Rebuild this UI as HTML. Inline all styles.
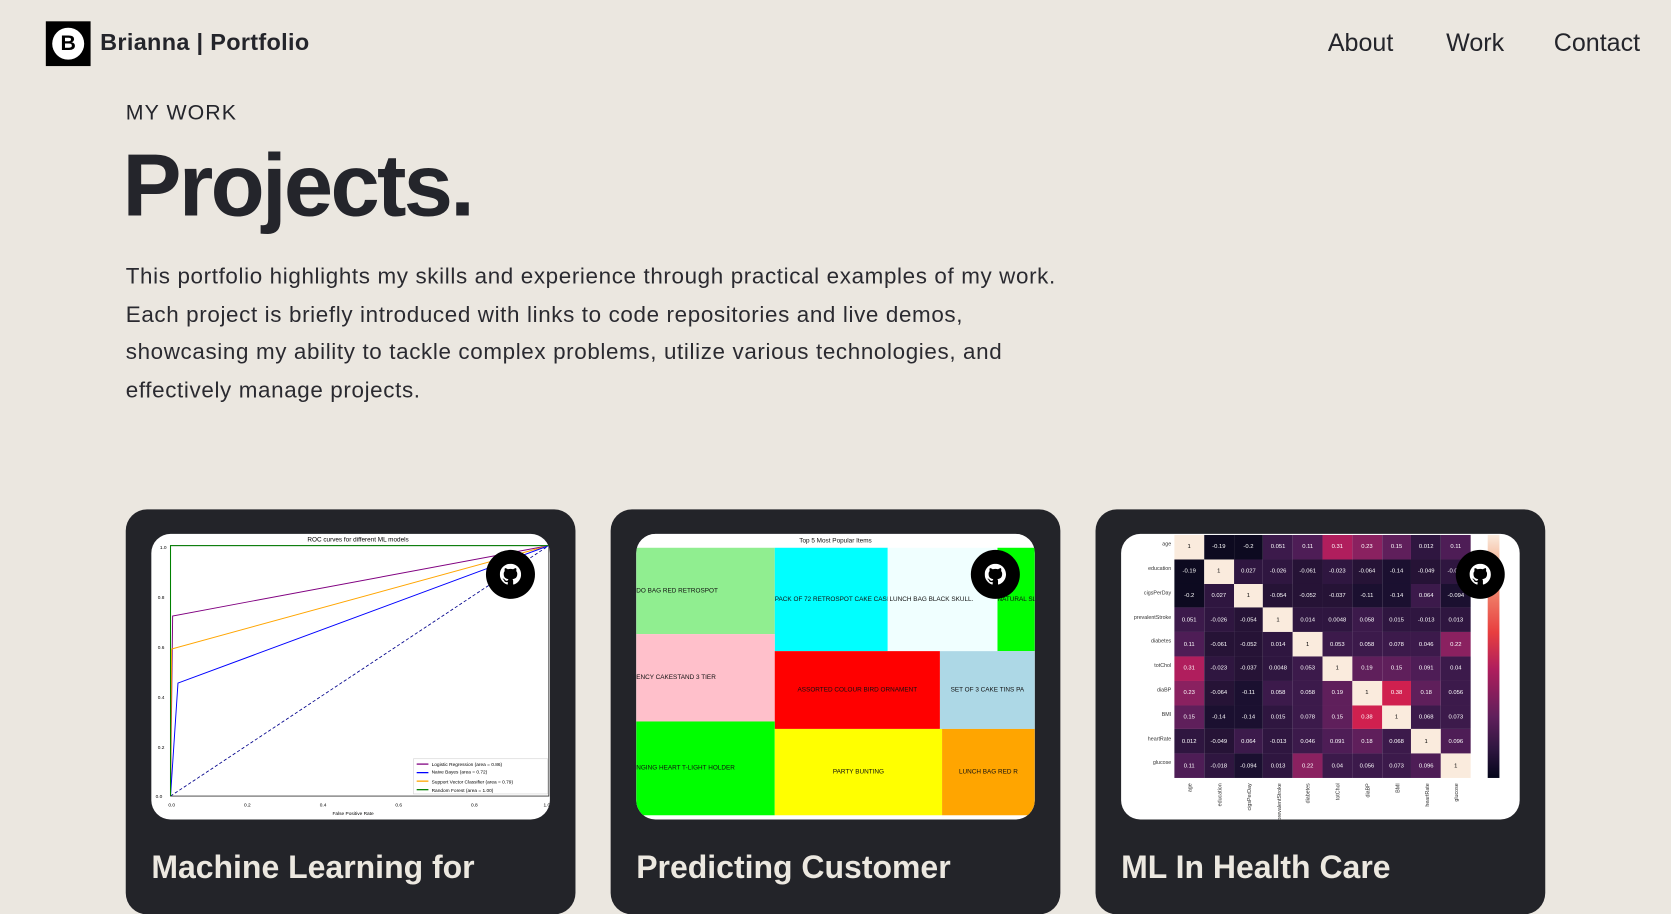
<!DOCTYPE html>
<html><head><meta charset="utf-8">
<style>
html,body{margin:0;padding:0;width:1671px;height:893px;overflow:hidden;background:#ebe7e0}
#w{position:absolute;left:0;top:0;width:1568px;height:838px;transform:scale(1.06569);transform-origin:0 0;font-family:"Liberation Sans",sans-serif;color:#24252b}
.a{position:absolute}
.nav{position:absolute;top:27px;font-size:23.5px;color:#24252b}
.card{position:absolute;top:478px;width:422px;height:380px;background:#232429;border-radius:20px}
.img{position:absolute;left:24px;top:23px;width:374px;height:268px;background:#fff;border-radius:18px;overflow:hidden}
.gh{position:absolute;width:46px;height:46px;border-radius:50%;background:#000;display:flex;align-items:center;justify-content:center}
.title{position:absolute;left:24px;top:320px;font-size:30px;font-weight:bold;color:#ece8e0;white-space:nowrap;letter-spacing:0px}
.tm div{position:absolute;font-size:6px;display:flex;align-items:center;color:#111;white-space:nowrap;overflow:hidden}
.hm{position:absolute;left:50px;top:1px;display:grid;grid-template-columns:repeat(10,27.8px);grid-auto-rows:22.8px}
.hm span{display:flex;align-items:center;justify-content:center;font-size:5.5px;color:#fff}
.a1{background:#0d0a20}.b{background:#1b1030}.c{background:#261336}.d{background:#2f1640}.e{background:#3c1a4b}.f{background:#4e1d56}.g{background:#5f1f5b}.h{background:#8a2160}.i{background:#b01e5d}.j{background:#d0204f}.k{background:#faebdd;color:#000!important}
.rl{position:absolute;left:0;width:47px;text-align:right;font-size:5px;color:#333}
</style></head><body><div id="w">
<div class="a" style="left:43px;top:20px;width:42px;height:42px;background:#000"><div class="a" style="left:6px;top:6px;width:30px;height:30px;border-radius:50%;background:#fff;color:#000;font-weight:bold;font-size:20px;text-align:center;line-height:30px">B</div></div>
<div class="a" style="left:94px;top:27px;font-size:22px;font-weight:bold;letter-spacing:0.3px">Brianna | Portfolio</div>
<div class="nav" style="left:1246px">About</div>
<div class="nav" style="left:1357px">Work</div>
<div class="nav" style="left:1458px">Contact</div>
<div class="a" style="left:118px;top:95px;font-size:20px;letter-spacing:1px">MY WORK</div>
<div class="a" style="left:115px;top:126px;font-size:83px;font-weight:900;letter-spacing:-2.5px">Projects.</div>
<div class="a" style="left:118px;top:242px;white-space:nowrap;font-size:21px;line-height:35.5px;letter-spacing:0.6px;color:#2a2a30">This portfolio highlights my skills and experience through practical examples of my work.<br>Each project is briefly introduced with links to code repositories and live demos,<br>showcasing my ability to tackle complex problems, utilize various technologies, and<br>effectively manage projects.</div>

<div class="card" style="left:118px"><div class="img">
<svg width="374" height="268" viewBox="142 502 374 268" style="position:absolute;left:0;top:0">
<text x="336" y="509" font-size="6" text-anchor="middle" font-family="Liberation Sans">ROC curves for different ML models</text>
<rect x="160" y="513" width="355" height="235" fill="none" stroke="#333" stroke-width="0.8"/>
<line x1="160" y1="748" x2="515" y2="513" stroke="#00008b" stroke-dasharray="3,2" stroke-width="0.8"/>
<polyline points="160,748 162,579 515,513" fill="none" stroke="#800080" stroke-width="0.9"/>
<polyline points="160,748 161,610 515,513" fill="none" stroke="#ffa500" stroke-width="0.9"/>
<polyline points="160,748 167,642 515,513" fill="none" stroke="#0000ff" stroke-width="0.9"/>
<polyline points="160,748 160,513 515,513" fill="none" stroke="#008000" stroke-width="1"/>
<rect x="388" y="713" width="126" height="33" fill="#fff" stroke="#ccc" stroke-width="0.5"/>
<g font-size="4.5" font-family="Liberation Sans"><text x="405" y="720">Logistic Regression (area = 0.86)</text><text x="405" y="727">Naive Bayes (area = 0.72)</text><text x="405" y="736">Support Vector Classifier (area = 0.79)</text><text x="405" y="744">Random Forest (area = 1.00)</text>
<text x="150" y="516">1.0</text><text x="148" y="563">0.8</text><text x="148" y="610">0.6</text><text x="148" y="657">0.4</text><text x="148" y="704">0.2</text><text x="146" y="750">0.0</text>
<text x="158" y="758">0.0</text><text x="229" y="758">0.2</text><text x="300" y="758">0.4</text><text x="371" y="758">0.6</text><text x="442" y="758">0.8</text><text x="510" y="758">1.0</text>
<text x="312" y="766">False Positive Rate</text></g>
<g stroke-width="1.2"><line x1="391" y1="718" x2="402" y2="718" stroke="#800080"/><line x1="391" y1="726" x2="402" y2="726" stroke="#0000ff"/><line x1="391" y1="734" x2="402" y2="734" stroke="#ffa500"/><line x1="391" y1="742" x2="402" y2="742" stroke="#008000"/></g>
</svg></div>
<div class="title">Machine Learning for</div></div>

<div class="card" style="left:573px"><div class="img tm">
<div style="left:0;top:0;width:374px;height:13px;justify-content:center;background:#fff">Top 5 Most Popular Items</div>
<div style="left:0;top:13px;width:130px;height:81px;background:#90ee90">DO BAG RED RETROSPOT</div>
<div style="left:130px;top:13px;width:106px;height:97px;background:#00ffff">PACK OF 72 RETROSPOT CAKE CASES</div>
<div style="left:236px;top:13px;width:103px;height:97px;background:#f0ffff">&nbsp;LUNCH BAG BLACK SKULL.</div>
<div style="left:339px;top:13px;width:35px;height:97px;background:#00ff00">NATURAL SLATE</div>
<div style="left:0;top:94px;width:130px;height:82px;background:#ffc0cb">ENCY CAKESTAND 3 TIER</div>
<div style="left:130px;top:110px;width:155px;height:73px;background:#ff0000;justify-content:center">ASSORTED COLOUR BIRD ORNAMENT</div>
<div style="left:285px;top:110px;width:89px;height:73px;background:#add8e6;justify-content:center">SET OF 3 CAKE TINS PA</div>
<div style="left:0;top:176px;width:130px;height:88px;background:#00ff00">NGING HEART T-LIGHT HOLDER</div>
<div style="left:130px;top:183px;width:157px;height:81px;background:#ffff00;justify-content:center">PARTY BUNTING</div>
<div style="left:287px;top:183px;width:87px;height:81px;background:#ffa500;justify-content:center">LUNCH BAG RED R</div>
</div>
<div class="title">Predicting Customer</div></div>

<div class="card" style="left:1028px"><div class="img">
<div class="rl" style="top:7px">age</div><div class="rl" style="top:30px">education</div><div class="rl" style="top:53px">cigsPerDay</div><div class="rl" style="top:76px">prevalentStroke</div><div class="rl" style="top:98px">diabetes</div><div class="rl" style="top:121px">totChol</div><div class="rl" style="top:144px">diaBP</div><div class="rl" style="top:167px">BMI</div><div class="rl" style="top:190px">heartRate</div><div class="rl" style="top:212px">glucose</div>
<div class="hm">
<span class="k">1</span><span class="a1">-0.19</span><span class="a1">-0.2</span><span class="e">0.051</span><span class="f">0.11</span><span class="i">0.31</span><span class="h">0.23</span><span class="g">0.15</span><span class="d">0.012</span><span class="f">0.11</span>
<span class="a1">-0.19</span><span class="k">1</span><span class="d">0.027</span><span class="d">-0.026</span><span class="c">-0.061</span><span class="d">-0.023</span><span class="c">-0.064</span><span class="b">-0.14</span><span class="c">-0.049</span><span class="d">-0.018</span>
<span class="a1">-0.2</span><span class="d">0.027</span><span class="k">1</span><span class="c">-0.054</span><span class="c">-0.052</span><span class="c">-0.037</span><span class="b">-0.11</span><span class="b">-0.14</span><span class="e">0.064</span><span class="b">-0.094</span>
<span class="e">0.051</span><span class="d">-0.026</span><span class="c">-0.054</span><span class="k">1</span><span class="d">0.014</span><span class="d">0.0048</span><span class="e">0.058</span><span class="d">0.015</span><span class="d">-0.013</span><span class="d">0.013</span>
<span class="f">0.11</span><span class="c">-0.061</span><span class="c">-0.052</span><span class="d">0.014</span><span class="k">1</span><span class="e">0.053</span><span class="e">0.058</span><span class="e">0.078</span><span class="e">0.046</span><span class="h">0.22</span>
<span class="i">0.31</span><span class="d">-0.023</span><span class="c">-0.037</span><span class="d">0.0048</span><span class="e">0.053</span><span class="k">1</span><span class="g">0.19</span><span class="g">0.15</span><span class="f">0.091</span><span class="e">0.04</span>
<span class="h">0.23</span><span class="c">-0.064</span><span class="b">-0.11</span><span class="e">0.058</span><span class="e">0.058</span><span class="g">0.19</span><span class="k">1</span><span class="j">0.38</span><span class="g">0.18</span><span class="e">0.056</span>
<span class="g">0.15</span><span class="b">-0.14</span><span class="b">-0.14</span><span class="d">0.015</span><span class="e">0.078</span><span class="g">0.15</span><span class="j">0.38</span><span class="k">1</span><span class="e">0.068</span><span class="e">0.073</span>
<span class="d">0.012</span><span class="c">-0.049</span><span class="e">0.064</span><span class="d">-0.013</span><span class="e">0.046</span><span class="f">0.091</span><span class="g">0.18</span><span class="e">0.068</span><span class="k">1</span><span class="f">0.096</span>
<span class="f">0.11</span><span class="d">-0.018</span><span class="b">-0.094</span><span class="d">0.013</span><span class="h">0.22</span><span class="e">0.04</span><span class="e">0.056</span><span class="e">0.073</span><span class="f">0.096</span><span class="k">1</span>
</div>
<div class="a" style="left:344px;top:1px;width:11px;height:228px;background:linear-gradient(#faebdd,#f3a481 15%,#e83f3f 40%,#b01e5d 55%,#5f1f5b 75%,#2f1640 88%,#03051a)"></div>
<svg class="a" style="left:60px;top:232px" width="280" height="36"><g font-size="5" fill="#333" font-family="Liberation Sans">
<text transform="translate(6,2) rotate(-90)" text-anchor="end">age</text><text transform="translate(34,2) rotate(-90)" text-anchor="end">education</text><text transform="translate(62,2) rotate(-90)" text-anchor="end">cigsPerDay</text><text transform="translate(90,2) rotate(-90)" text-anchor="end">prevalentStroke</text><text transform="translate(117,2) rotate(-90)" text-anchor="end">diabetes</text><text transform="translate(145,2) rotate(-90)" text-anchor="end">totChol</text><text transform="translate(173,2) rotate(-90)" text-anchor="end">diaBP</text><text transform="translate(201,2) rotate(-90)" text-anchor="end">BMI</text><text transform="translate(229,2) rotate(-90)" text-anchor="end">heartRate</text><text transform="translate(256,2) rotate(-90)" text-anchor="end">glucose</text></g></svg>
</div>
<div class="title">ML In Health Care</div></div>

<div class="gh" style="left:456px;top:516px"><svg width="20" height="20" viewBox="0 0 16 16"><path fill="#fff" d="M8 0C3.58 0 0 3.58 0 8c0 3.54 2.29 6.53 5.47 7.590.4.07.55-.17.55-.38 0-.19-.01-.82-.01-1.49-2.01.37-2.53-.49-2.69-.94-.09-.23-.48-.94-.82-1.13-.28-.15-.68-.52-.01-.53.63-.01 1.08.58 1.23.82.72 1.21 1.87.87 2.33.66.07-.52.28-.87.51-1.07-1.78-.2-3.64-.89-3.64-3.95 0-.87.31-1.59.82-2.15-.08-.2-.36-1.02.08-2.12 0 0 .67-.21 2.2.82.64-.18 1.32-.27 2-.27.68 0 1.36.09 2 .27 1.53-1.04 2.2-.82 2.2-.82.44 1.1.16 1.92.08 2.12.51.56.82 1.27.82 2.15 0 3.07-1.87 3.75-3.65 3.95.29.25.54.73.54 1.48 0 1.07-.01 1.93-.01 2.2 0 .21.15.46.55.38A8.013 8.013 0 0016 8c0-4.42-3.58-8-8-8z"/></svg></div>
<div class="gh" style="left:911px;top:516px"><svg width="20" height="20" viewBox="0 0 16 16"><path fill="#fff" d="M8 0C3.58 0 0 3.58 0 8c0 3.54 2.29 6.53 5.47 7.59.4.07.55-.17.55-.38 0-.19-.01-.82-.01-1.49-2.01.37-2.53-.49-2.69-.94-.09-.23-.48-.94-.82-1.13-.28-.15-.68-.52-.01-.53.63-.01 1.08.58 1.23.82.72 1.21 1.87.87 2.33.66.07-.52.28-.87.51-1.07-1.78-.2-3.64-.89-3.64-3.95 0-.87.31-1.59.82-2.15-.08-.2-.36-1.02.08-2.12 0 0 .67-.21 2.2.82.64-.18 1.32-.27 2-.27.68 0 1.36.09 2 .27 1.53-1.04 2.2-.82 2.2-.82.44 1.1.16 1.92.08 2.12.51.56.82 1.27.82 2.15 0 3.07-1.87 3.75-3.65 3.95.29.25.54.73.54 1.48 0 1.07-.01 1.93-.01 2.2 0 .21.15.46.55.38A8.013 8.013 0 0016 8c0-4.42-3.58-8-8-8z"/></svg></div>
<div class="gh" style="left:1366px;top:516px"><svg width="20" height="20" viewBox="0 0 16 16"><path fill="#fff" d="M8 0C3.58 0 0 3.58 0 8c0 3.54 2.29 6.53 5.47 7.59.4.07.55-.17.55-.38 0-.19-.01-.82-.01-1.49-2.01.37-2.53-.49-2.69-.94-.09-.23-.48-.94-.82-1.13-.28-.15-.68-.52-.01-.53.63-.01 1.08.58 1.23.82.72 1.21 1.87.87 2.33.66.07-.52.28-.87.51-1.07-1.78-.2-3.64-.89-3.64-3.95 0-.87.31-1.59.82-2.15-.08-.2-.36-1.02.08-2.12 0 0 .67-.21 2.2.82.64-.18 1.32-.27 2-.27.68 0 1.36.09 2 .27 1.53-1.04 2.2-.82 2.2-.82.44 1.1.16 1.92.08 2.12.51.56.82 1.27.82 2.15 0 3.07-1.87 3.75-3.65 3.95.29.25.54.73.54 1.48 0 1.07-.01 1.93-.01 2.2 0 .21.15.46.55.38A8.013 8.013 0 0016 8c0-4.42-3.58-8-8-8z"/></svg></div>
</div></body></html>
